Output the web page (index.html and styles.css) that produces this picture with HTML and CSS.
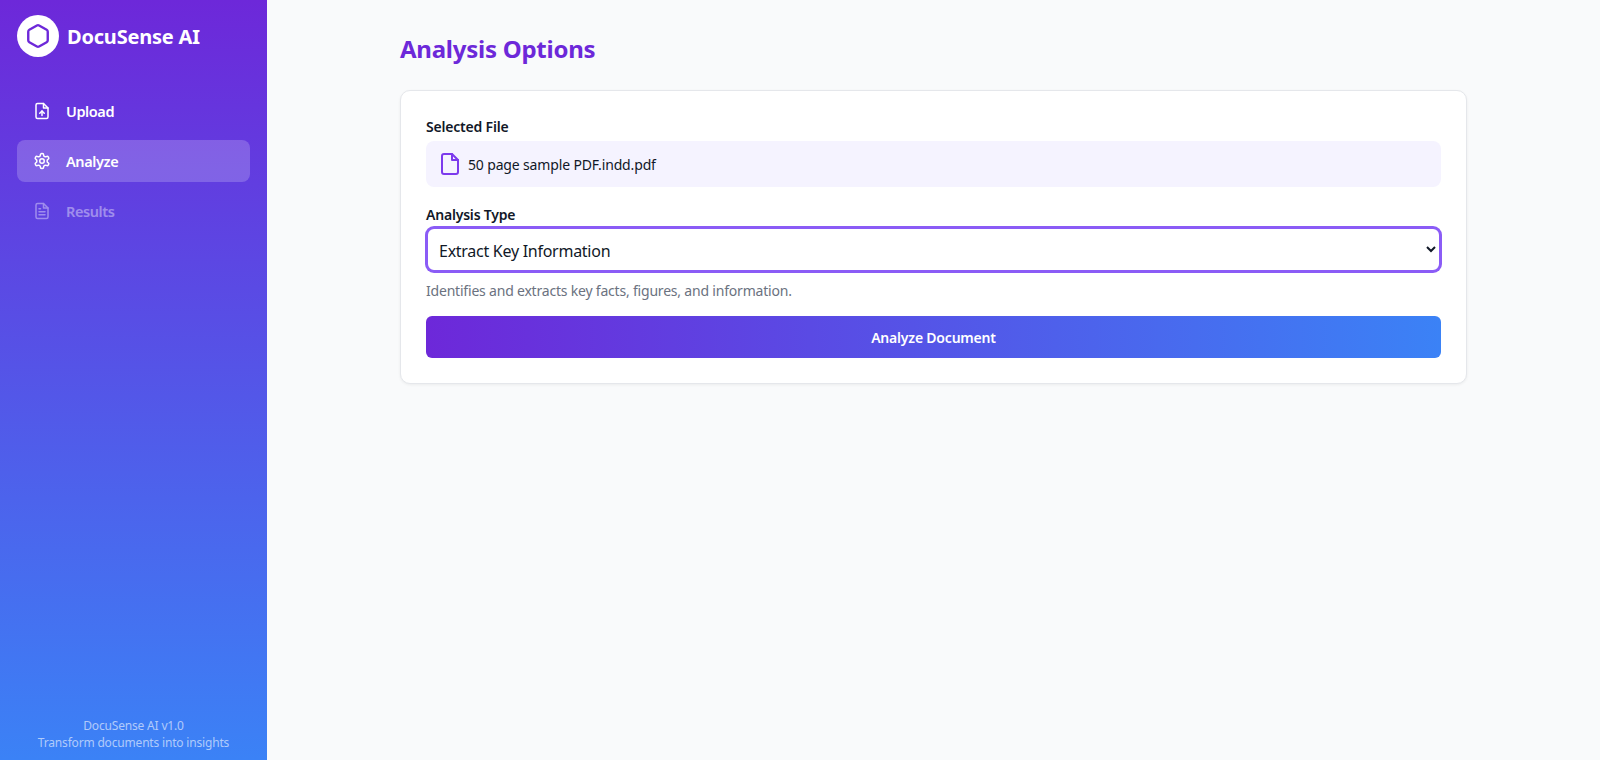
FILE: index.html
```html
<!DOCTYPE html>
<html lang="en">
<head>
<meta charset="utf-8">
<title>DocuSense AI</title>
<link rel="stylesheet" href="styles.css">
</head>
<body>
<div class="app">
  <aside class="sidebar">
    <div class="brand">
      <div class="logo">
        <svg class="logo-icon" viewBox="0 0 24 24" fill="none" stroke="#6d28d9" stroke-width="2.2" stroke-linejoin="round"><path d="M21 16V8a2 2 0 0 0-1-1.73l-7-4a2 2 0 0 0-2 0l-7 4A2 2 0 0 0 3 8v8a2 2 0 0 0 1 1.73l7 4a2 2 0 0 0 2 0l7-4A2 2 0 0 0 21 16z"/></svg>
      </div>
      <span class="brand-name">DocuSense AI</span>
    </div>
    <nav class="nav">
      <a class="nav-item">
        <svg class="nav-icon" viewBox="0 0 24 24" fill="none" stroke="currentColor" stroke-width="2" stroke-linecap="round" stroke-linejoin="round"><path d="M14 2H6a2 2 0 0 0-2 2v16a2 2 0 0 0 2 2h12a2 2 0 0 0 2-2V8z"/><path d="M14 2v6h6"/><path d="M12 18v-6"/><path d="M9 15l3-3 3 3"/></svg>
        <span>Upload</span>
      </a>
      <a class="nav-item active">
        <svg class="nav-icon" viewBox="0 0 24 24" fill="none" stroke="currentColor" stroke-width="2" stroke-linecap="round" stroke-linejoin="round"><path d="M12.22 2h-.44a2 2 0 0 0-2 2v.18a2 2 0 0 1-1 1.73l-.43.25a2 2 0 0 1-2 0l-.15-.08a2 2 0 0 0-2.73.73l-.22.38a2 2 0 0 0 .73 2.73l.15.1a2 2 0 0 1 1 1.72v.51a2 2 0 0 1-1 1.74l-.15.09a2 2 0 0 0-.73 2.73l.22.38a2 2 0 0 0 2.73.73l.15-.08a2 2 0 0 1 2 0l.43.25a2 2 0 0 1 1 1.73V20a2 2 0 0 0 2 2h.44a2 2 0 0 0 2-2v-.18a2 2 0 0 1 1-1.73l.43-.25a2 2 0 0 1 2 0l.15.08a2 2 0 0 0 2.73-.73l.22-.39a2 2 0 0 0-.73-2.73l-.15-.08a2 2 0 0 1-1-1.74v-.5a2 2 0 0 1 1-1.74l.15-.09a2 2 0 0 0 .73-2.73l-.22-.38a2 2 0 0 0-2.73-.73l-.15.08a2 2 0 0 1-2 0l-.43-.25a2 2 0 0 1-1-1.73V4a2 2 0 0 0-2-2z"/><circle cx="12" cy="12" r="3"/></svg>
        <span>Analyze</span>
      </a>
      <a class="nav-item disabled">
        <svg class="nav-icon" viewBox="0 0 24 24" fill="none" stroke="currentColor" stroke-width="2" stroke-linecap="round" stroke-linejoin="round"><path d="M14 2H6a2 2 0 0 0-2 2v16a2 2 0 0 0 2 2h12a2 2 0 0 0 2-2V8z"/><path d="M14 2v6h6"/><path d="M16 13H8"/><path d="M16 17H8"/><path d="M10 9H8"/></svg>
        <span>Results</span>
      </a>
    </nav>
    <footer class="side-footer">
      <div>DocuSense AI v1.0</div>
      <div>Transform documents into insights</div>
    </footer>
  </aside>
  <main class="main">
    <div class="content">
      <h1 class="title">Analysis Options</h1>
      <section class="card">
        <div class="field-label file-label">Selected File</div>
        <div class="file-box">
          <svg class="file-icon" viewBox="0 0 24 24" fill="none" stroke="#7c3aed" stroke-width="2" stroke-linecap="round" stroke-linejoin="round"><path d="M14 2H6a2 2 0 0 0-2 2v16a2 2 0 0 0 2 2h12a2 2 0 0 0 2-2V8z"/><path d="M14 2v6h6"/></svg>
          <span>50 page sample PDF.indd.pdf</span>
        </div>
        <label class="field-label type-label" for="type">Analysis Type</label>
        <select class="select" id="type">
          <option>Extract Key Information</option>
        </select>
        <p class="help">Identifies and extracts key facts, figures, and information.</p>
        <button class="analyze" type="button">Analyze Document</button>
      </section>
    </div>
  </main>
</div>
</body>
</html>
```
FILE: styles.css
```css
* { box-sizing: border-box; }
html, body { margin: 0; height: 100%; overflow: hidden; }
body { font-family: "Noto Sans", "Open Sans", sans-serif; color: #111827; background: #f9fafb; }
.app { display: flex; height: 760px; }
.sidebar {
  width: 267px; flex: none; display: flex; flex-direction: column;
  padding: 15px 17px 9px; color: #fff;
  background: linear-gradient(180deg, #6d28d9 0%, #3b82f6 100%);
}
.brand { display: flex; align-items: center; gap: 8px; height: 42px; margin-bottom: 33px; }
.logo { width: 42px; height: 42px; border-radius: 50%; background: #fff; display: flex; align-items: center; justify-content: center; }
.logo-icon { width: 26px; height: 26px; }
.brand-name { font-size: 20px; font-weight: 700; letter-spacing: -0.2px; white-space: nowrap; }
.nav { display: flex; flex-direction: column; gap: 8px; }
.nav-item { display: flex; align-items: center; gap: 15px; height: 42px; padding: 0 16px; border-radius: 8px; font-size: 14.5px; font-weight: 600; letter-spacing: -0.4px; color: #fff; }
.nav-item.active { background: rgba(255, 255, 255, 0.2); }
.nav-item.disabled { opacity: 0.4; }
.nav-icon { width: 18px; height: 18px; flex: none; }
.side-footer { margin-top: auto; text-align: center; font-size: 12px; line-height: 16.5px; letter-spacing: -0.18px; color: rgba(255, 255, 255, 0.6); }
.main { flex: 1; min-width: 0; display: flex; justify-content: center; }
.content { width: 1067px; padding-top: 32px; }
.title { margin: 0 0 24px; font-size: 24px; line-height: 34px; font-weight: 700; color: #6d28d9; letter-spacing: -0.25px; }
.card { background: #fff; border: 1px solid #e5e7eb; border-radius: 10px; padding: 25px; box-shadow: 0 1px 3px rgba(0, 0, 0, 0.06); }
.field-label { display: block; font-size: 14px; line-height: 20px; font-weight: 600; letter-spacing: -0.2px; color: #111827; }
.file-label { margin-top: 1px; }
.file-box { margin-top: 4px; height: 46px; padding: 0 12px; display: flex; align-items: center; gap: 6px; background: #f5f3ff; border-radius: 8px; font-size: 14px; letter-spacing: -0.15px; color: #111827; }
.file-icon { width: 24px; height: 24px; flex: none; }
.type-label { margin-top: 18px; }
.select { display: block; width: 100%; height: 45px; margin-top: 2px; padding: 2px 7px 0; background: #fff; border: 2px solid #8b5cf6; box-shadow: 0 0 0 1px #8b5cf6; border-radius: 8px; font-family: inherit; font-size: 16px; letter-spacing: -0.27px; color: #111827; }
.help { margin: 9px 0 0; font-size: 14px; line-height: 20px; letter-spacing: -0.2px; color: #6b7280; }
.analyze { display: block; width: 100%; height: 42px; margin-top: 15px; padding: 1px 0 0; border: 0; border-radius: 6px; background: linear-gradient(90deg, #6d28d9, #3b82f6); color: #fff; font-family: inherit; font-size: 14px; font-weight: 600; letter-spacing: -0.2px; }
```
